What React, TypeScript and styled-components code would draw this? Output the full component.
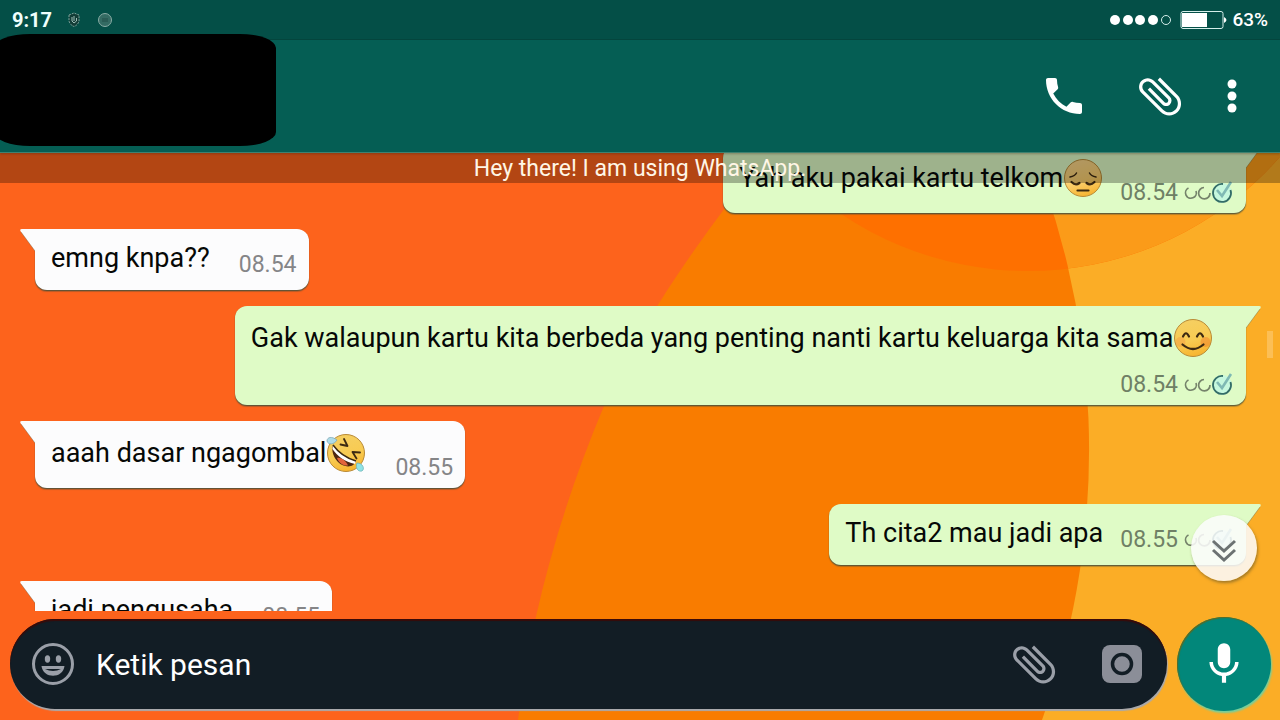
import React from "react";
import styled, { createGlobalStyle } from "styled-components";

const GlobalStyle = createGlobalStyle`
  *, *::before, *::after { box-sizing: border-box; }
  html, body { margin: 0; padding: 0; }
  body { font-family: Roboto, "Liberation Sans", sans-serif; background: #fd631c; }
  button { font: inherit; border: 0; padding: 0; background: none; color: inherit; cursor: pointer; }
`;

const Screen = styled.div`
  position: relative;
  display: flex;
  flex-direction: column;
  width: 100%;
  height: 100vh;
  overflow: hidden;
`;

const WallpaperSvg = styled.svg`
  position: absolute;
  inset: 0;
  width: 100%;
  height: 100%;
`;

const StatusBar = styled.div`
  position: relative;
  display: flex;
  align-items: center;
  justify-content: space-between;
  flex: none;
  height: 40px;
  padding: 0 12px;
  background: #044f47;
  border-bottom: 1px solid #04473f;
  color: #fff;
`;

const StatusGroup = styled.div<{ $gap: number }>`
  display: flex;
  align-items: center;
  gap: ${(p) => p.$gap}px;
`;

const Clock = styled.time`
  font-size: 20px;
  line-height: 24px;
  font-weight: 700;
  color: #f0fffd;
`;

const BatteryText = styled.span`
  font-size: 19px;
  line-height: 24px;
  font-weight: 500;
`;

const Header = styled.header`
  position: relative;
  z-index: 2;
  display: flex;
  align-items: center;
  justify-content: space-between;
  flex: none;
  height: 113px;
  padding-right: 40px;
  background: #055e54;
  border-bottom: 1px solid #3f8270;
  box-shadow: 0 1px 2px rgba(60, 30, 10, 0.3);
`;

const HiddenContact = styled.div`
  align-self: flex-start;
  width: 282px;
  height: 112px;
  margin: -6px 0 0 -6px;
  background: #000;
  border-radius: 36px / 14px;
`;

const HeaderActions = styled.nav`
  display: flex;
  align-items: center;
  gap: 38px;
  color: #fff;
`;

const IconButton = styled.button<{ $width?: number }>`
  display: flex;
  align-items: center;
  justify-content: center;
  flex: none;
  ${(p) => p.$width && `width: ${p.$width}px;`}
  svg { display: block; }
`;

const Chat = styled.main`
  position: relative;
  flex: 1;
  min-height: 0;
  overflow: hidden;
`;

const Banner = styled.p`
  position: absolute;
  z-index: 1;
  inset: 0 0 auto 0;
  height: 30px;
  margin: 0;
  background: rgba(0, 0, 0, 0.29);
  color: #fff6e6;
  font-size: 23px;
  line-height: 32px;
  text-align: center;
`;

const Messages = styled.ol`
  display: flex;
  flex-direction: column;
  gap: 16px;
  margin: -7px 0 0;
  padding: 0 34px 0 35px;
  list-style: none;
`;

const Bubble = styled.li<{ $sent?: boolean; $stacked?: boolean }>`
  position: relative;
  display: flex;
  flex-direction: ${(p) => (p.$stacked ? "column" : "row")};
  align-items: ${(p) => (p.$stacked ? "stretch" : "flex-end")};
  align-self: ${(p) => (p.$sent ? "flex-end" : "flex-start")};
  column-gap: ${(p) => (p.$sent ? 17 : 29)}px;
  row-gap: 9px;
  ${(p) => p.$stacked && "width: 83.5%;"}
  padding: 13px 12px 11px 16px;
  background: ${(p) => (p.$sent ? "#dffbc6" : "#fcfcfd")};
  border-radius: ${(p) => (p.$sent ? "12px 0 12px 12px" : "0 12px 12px 12px")};
  box-shadow: 0 1px 1px rgba(70, 80, 60, 0.85), 0 2px 1px rgba(70, 80, 60, 0.3);
  color: ${(p) => (p.$sent ? "#6f8065" : "#858587")};
`;

const TailSvg = styled.svg<{ $sent?: boolean }>`
  position: absolute;
  top: 0;
  ${(p) => (p.$sent ? "left: 100%; transform: scaleX(-1);" : "right: 100%;")}
`;

const Body = styled.p`
  display: flex;
  align-items: center;
  margin: 0 0 5px;
  font-size: 27px;
  line-height: 32px;
  color: #060806;
  white-space: nowrap;
  svg { flex: none; display: block; margin: -1px 0; }
`;

const Meta = styled.span<{ $low?: boolean }>`
  display: flex;
  align-items: center;
  justify-content: flex-end;
  gap: 6px;
  margin-bottom: ${(p) => (p.$low ? -5 : 0)}px;
  font-size: 23px;
  line-height: 28px;
  svg { display: block; }
`;

const ScrollThumb = styled.div`
  position: absolute;
  top: 178px;
  right: 7px;
  width: 6px;
  height: 27px;
  background: rgba(255, 255, 255, 0.22);
`;

const ScrollDown = styled(IconButton)`
  position: absolute;
  right: 23px;
  bottom: 30px;
  width: 66px;
  height: 66px;
  border-radius: 50%;
  background: rgba(252, 252, 252, 0.87);
  box-shadow: 1px 2px 3px rgba(90, 80, 40, 0.55);
  color: #6c7272;
`;

const Composer = styled.form`
  position: relative;
  display: flex;
  align-items: center;
  gap: 10px;
  flex: none;
  padding: 6px 9px 9px 10px;
`;

const Field = styled.div`
  display: flex;
  align-items: center;
  flex: 1;
  min-width: 0;
  height: 90px;
  padding: 0 24px 0 21px;
  border-radius: 45px;
  background: #121d25;
  box-shadow: inset 0 2px 1px #3a0a08, 1px 2px 1px #a9a9ac;
  color: #9a9fa8;
`;

const TextInput = styled.input`
  flex: 1;
  min-width: 0;
  margin: 0 12px 0 21px;
  padding: 2px 0 0;
  border: 0;
  outline: 0;
  background: transparent;
  color: #fff;
  font: 30px/40px Roboto, "Liberation Sans", sans-serif;
  &::placeholder { color: #fff; opacity: 1; }
`;

const FieldActions = styled.div`
  display: flex;
  align-items: center;
  gap: 41px;
`;

const MicButton = styled(IconButton)`
  width: 94px;
  height: 94px;
  border-radius: 50%;
  background: #02877a;
  box-shadow: inset 1px 1px 1px #5d6a20, 1px 2px 2px #6fd0a0;
  color: #fff;
`;

const Wallpaper = () => (
  <WallpaperSvg viewBox="0 0 1280 720" preserveAspectRatio="none" aria-hidden="true">
    <rect width="1280" height="720" fill="#fd631c" />
    <path d="M778 140C710 225 645 312 604 406C560 510 530 620 518 720H1280V140Z" fill="#f97c00" />
    <path d="M1018 120A800 800 0 0 1 1042 720H1280V120Z" fill="#fbad26" />
    <clipPath id="right-of-arc">
      <path d="M1018 120A800 800 0 0 1 1042 720H1280V120Z" />
    </clipPath>
    <circle cx="1028" cy="-64" r="335" fill="#fe7000" />
    <circle cx="1028" cy="-64" r="335" fill="#fb9b19" clipPath="url(#right-of-arc)" />
  </WallpaperSvg>
);

const Tail = ({ sent }: { sent?: boolean }) => (
  <TailSvg $sent={sent} width="15" height="24" viewBox="0 0 15 24" aria-hidden="true">
    <path d="M15 0H2Q-1 0 1 3L15 22Z" fill={sent ? "#dffbc6" : "#fcfcfd"} />
    <path d="M1 3L15 22" stroke="#55502e" strokeOpacity=".35" fill="none" />
  </TailSvg>
);

const Clip = ({ size }: { size: number }) => (
  <svg width={size} height={size} viewBox="0 0 24 24" fill="currentColor" aria-hidden="true">
    <path
      transform="rotate(-45 12 12)"
      d="M16.5 6v11.5c0 2.21-1.79 4-4 4s-4-1.79-4-4V5c0-1.38 1.12-2.5 2.5-2.5s2.5 1.12 2.5 2.5v10.5c0 .55-.45 1-1 1s-1-.45-1-1V6H10v9.5c0 1.38 1.12 2.5 2.5 2.5s2.5-1.12 2.5-2.5V5c0-2.21-1.79-4-4-4S7 2.79 7 5v12.5c0 3.04 2.46 5.5 5.5 5.5s5.5-2.46 5.5-5.5V6h-1.5z"
    />
  </svg>
);

const Receipt = () => (
  <svg width="50" height="26" viewBox="0 0 50 26" fill="none" role="img" aria-label="Dibaca">
    <path d="M4.500 8A5.400 5.400 0 1 0 12 11" stroke="#75836b" strokeWidth="1.700" />
    <path d="M20 7.500A5.700 5.700 0 1 0 26 13" stroke="#75836b" strokeWidth="1.700" />
    <circle cx="38" cy="13" r="10" fill="#b5f7ee" fillOpacity=".6" />
    <path d="M39 4A9 9 0 1 0 46.500 10" stroke="#336c66" strokeWidth="1.800" />
    <path d="M33 10L38 16L47 2" stroke="#7fb9b4" strokeWidth="2.600" />
  </svg>
);

type Mood = "pensive" | "blush" | "rofl";

const labels: Record<Mood, string> = { pensive: "😔", blush: "😊", rofl: "🤣" };

const Emoji = ({ mood }: { mood: Mood }) => (
  <svg width="40" height="40" viewBox="0 0 40 40" fill="none" role="img" aria-label={labels[mood]}>
    <defs>
      <linearGradient id={`face-${mood}`} x1=".35" y1="0" x2=".65" y2="1">
        <stop offset="0" stopColor={mood === "pensive" ? "#fbd68a" : "#f5cf62"} />
        <stop offset=".55" stopColor={mood === "pensive" ? "#fbd070" : "#f8cb52"} />
        <stop offset="1" stopColor="#f7b22c" />
      </linearGradient>
    </defs>
    <circle cx="20" cy="20" r="18.500" fill={`url(#face-${mood})`} stroke="#b98a35" />
    {mood === "pensive" && (
      <g stroke="#3d2a12" strokeWidth="2.200" strokeLinecap="round">
        <path d="M7 19Q12 18 13.500 15M26.500 15Q28 18 33 19" strokeWidth="1.500" />
        <path d="M8.500 24Q12.500 28 16.500 25M23.500 25Q27.500 28 31.500 24M14.500 32.500H25.500" />
      </g>
    )}
    {mood === "blush" && (
      <>
        <circle cx="7.500" cy="24" r="5" fill="#f08a3c" fillOpacity=".35" />
        <circle cx="32.500" cy="24" r="5" fill="#ef7b2b" fillOpacity=".45" />
        <g stroke="#3d2a12" strokeWidth="2.200" strokeLinecap="round">
          <path d="M10 18.500Q13 12 16 18.500M24 18.500Q27 12 30 18.500" />
          <path d="M9.500 26.500Q20 35.500 30.500 26.500" />
        </g>
      </>
    )}
    {mood === "rofl" && (
      <>
        <path d="M7 12C12 19 20 25 30 28C28 35 18 35 12 29C8 25 5 18 7 12Z" fill="#4c2712" />
        <path d="M7 12C12 19 20 25 30 28L29 31C19 29 11 23 6.500 16Z" fill="#fff" />
        <path d="M11 25C15 24 20 28 22 32.500C17 33 13 30 11 25Z" fill="#e2643c" />
        <path d="M7 12C12 19 20 25 30 28" stroke="#3d2a12" strokeWidth="1.500" />
        <path d="M18 6L21.500 13L14.500 11.500M34 19.500L26.500 19L30.500 25.500" stroke="#3d2a12" strokeWidth="1.800" strokeLinecap="round" strokeLinejoin="round" />
        <path d="M11 7C6 3 1 4 1 8C2 12 8 12 11 7Z" fill="#aedbe8" stroke="#7fa9b5" strokeWidth=".8" />
        <path d="M31 30C37 30 39 36 36 38C32 39 29 35 31 30Z" fill="#8fe3e6" stroke="#6fb5b8" strokeWidth=".8" />
      </>
    )}
  </svg>
);

type Message = { text: string; time: string; sent?: boolean; mood?: Mood; stacked?: boolean };

const messages: Message[] = [
  { text: "Yah aku pakai kartu telkom", time: "08.54", sent: true, mood: "pensive" },
  { text: "emng knpa??", time: "08.54" },
  {
    text: "Gak walaupun kartu kita berbeda yang penting nanti kartu keluarga kita sama",
    time: "08.54",
    sent: true,
    mood: "blush",
    stacked: true,
  },
  { text: "aaah dasar ngagombal", time: "08.55", mood: "rofl" },
  { text: "Th cita2 mau jadi apa", time: "08.55", sent: true },
  { text: "jadi pengusaha", time: "08.55" },
];

export default function App() {
  return (
    <>
      <GlobalStyle />
      <Screen>
        <Wallpaper />
        <StatusBar>
          <StatusGroup $gap={16}>
            <Clock>9:17</Clock>
            <svg width="46" height="16" viewBox="0 0 46 16" fill="none" aria-hidden="true">
              <path d="M1 3L6 1L11 3V9Q10 13 6 14.500Q2 13 1 9Z" fill="#123c36" stroke="#80a59d" strokeDasharray="2 1" />
              <path d="M4 5V9L6 11L8.500 9V6M6 4V9" stroke="#a0bfb8" />
              <circle cx="37" cy="8" r="6.500" fill="#346b63" stroke="#89aca5" />
              <path d="M34 7H40M34 9H40" stroke="#214f49" />
            </svg>
          </StatusGroup>
          <StatusGroup $gap={5}>
            <svg width="117" height="20" viewBox="0 0 117 20" fill="none" aria-hidden="true">
              <g fill="#fff">
                <circle cx="5" cy="10" r="5" />
                <circle cx="18" cy="10" r="5" />
                <circle cx="30" cy="10" r="5" />
                <circle cx="43" cy="10" r="5" />
              </g>
              <circle cx="56" cy="10" r="4.500" stroke="#d5eeea" />
              <rect x="71" y="1.500" width="42" height="17" rx="2" stroke="#d5eeea" />
              <rect x="72" y="3" width="25" height="14" fill="#fff" />
              <path d="M114 7Q119 10 114 13Z" fill="#fff" />
            </svg>
            <BatteryText>63%</BatteryText>
          </StatusGroup>
        </StatusBar>

        <Header>
          <HiddenContact />
          <HeaderActions>
            <IconButton type="button" $width={64} aria-label="Panggilan suara">
              <svg width="48" height="48" viewBox="0 0 24 24" fill="currentColor" aria-hidden="true">
                <path d="M6.620 10.790c1.440 2.830 3.760 5.140 6.590 6.590l2.200-2.200c.27-.27.67-.36 1.020-.24 1.120.37 2.330.57 3.570.57.55 0 1 .45 1 1V20c0 .55-.45 1-1 1-9.390 0-17-7.610-17-17 0-.55.45-1 1-1h3.500c.55 0 1 .45 1 1 0 1.250.2 2.450.57 3.570.11.35.03.74-.25 1.020l-2.200 2.200z" />
              </svg>
            </IconButton>
            <IconButton type="button" aria-label="Lampirkan">
              <Clip size={52} />
            </IconButton>
            <IconButton type="button" aria-label="Opsi lainnya">
              <svg width="16" height="36" viewBox="0 0 16 36" fill="currentColor" aria-hidden="true">
                <circle cx="8" cy="6" r="4.500" />
                <circle cx="8" cy="18" r="4.500" />
                <circle cx="8" cy="30" r="4.500" />
              </svg>
            </IconButton>
          </HeaderActions>
        </Header>

        <Chat>
          <Banner>Hey there! I am using WhatsApp.</Banner>
          <Messages>
            {messages.map((m) => (
              <Bubble key={m.text} $sent={m.sent} $stacked={m.stacked}>
                <Tail sent={m.sent} />
                <Body>
                  {m.text}
                  {m.mood && <Emoji mood={m.mood} />}
                </Body>
                <Meta $low={Boolean(m.mood)}>
                  <time>{m.time}</time>
                  {m.sent && <Receipt />}
                </Meta>
              </Bubble>
            ))}
          </Messages>
          <ScrollThumb />
          <ScrollDown type="button" aria-label="Gulir ke bawah">
            <svg width="28" height="28" viewBox="0 0 28 28" fill="none" stroke="currentColor" strokeWidth="3" aria-hidden="true">
              <path d="M3 7L14 17L25 7M3 16L14 26L25 16" />
            </svg>
          </ScrollDown>
        </Chat>

        <Composer onSubmit={(e) => e.preventDefault()}>
          <Field>
            <IconButton type="button" aria-label="Emoji">
              <svg width="44" height="44" viewBox="0 0 44 44" fill="none" aria-hidden="true">
                <circle cx="22" cy="22" r="19.500" stroke="currentColor" strokeWidth="3" />
                <ellipse cx="16.500" cy="17" rx="2.700" ry="3.700" fill="currentColor" />
                <ellipse cx="27.500" cy="17" rx="2.700" ry="3.700" fill="currentColor" />
                <path d="M10.500 24H33.500C32 37 12 37 10.500 24Z" fill="currentColor" />
                <path d="M14 27H30Q22 31 14 27Z" fill="#121d25" />
              </svg>
            </IconButton>
            <TextInput type="text" placeholder="Ketik pesan" aria-label="Ketik pesan" />
            <FieldActions>
              <IconButton type="button" aria-label="Lampirkan berkas">
                <Clip size={52} />
              </IconButton>
              <IconButton type="button" aria-label="Kamera">
                <svg width="42" height="40" viewBox="0 0 42 40" fill="none" aria-hidden="true">
                  <rect x="1" y="1" width="40" height="38" rx="8" fill="#8b8e98" />
                  <circle cx="21" cy="20" r="9.500" stroke="#121d25" strokeWidth="3.500" />
                </svg>
              </IconButton>
            </FieldActions>
          </Field>
          <MicButton type="button" aria-label="Pesan suara">
            <svg width="50" height="50" viewBox="0 0 24 24" fill="currentColor" aria-hidden="true">
              <path d="M12 14c1.660 0 3-1.340 3-3V5c0-1.660-1.340-3-3-3S9 3.340 9 5v6c0 1.660 1.340 3 3 3zm5.300-3c0 3-2.540 5.100-5.300 5.100S6.700 14 6.700 11H5c0 3.410 2.720 6.230 6 6.720V21h2v-3.280c3.280-.48 6-3.300 6-6.720h-1.700z" />
            </svg>
          </MicButton>
        </Composer>
      </Screen>
    </>
  );
}
